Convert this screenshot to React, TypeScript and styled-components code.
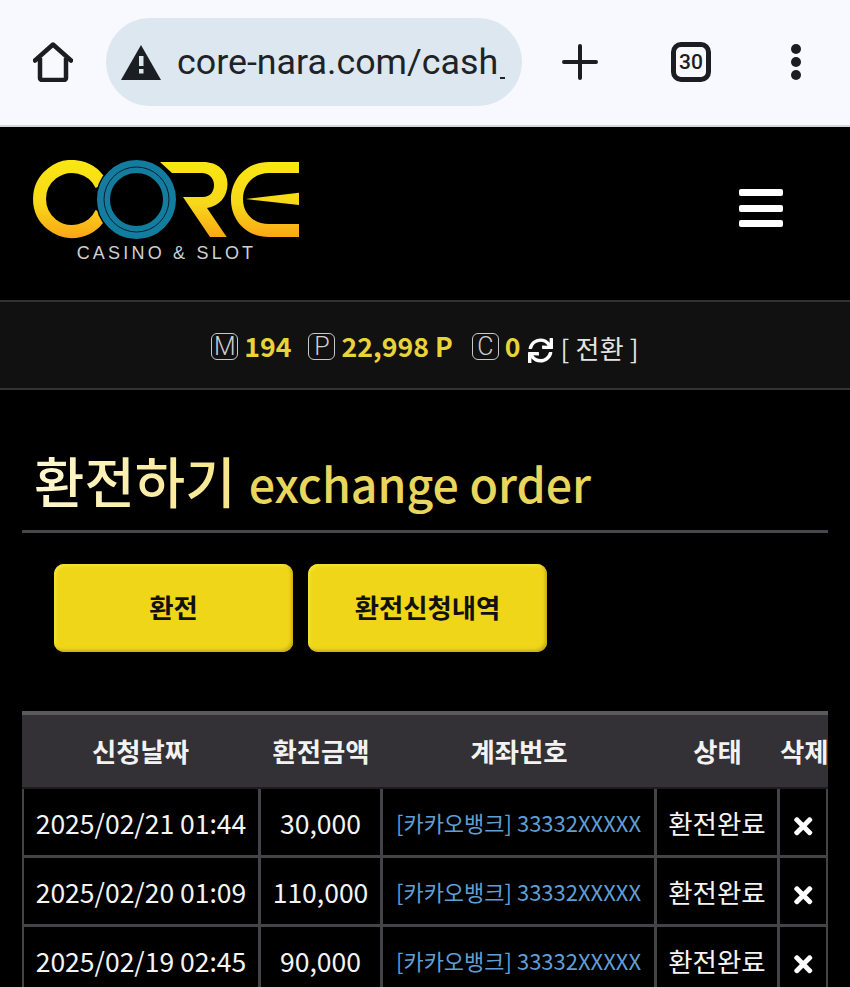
import styled, { createGlobalStyle } from "styled-components";
import { FaSync, FaTimes } from "react-icons/fa";

const rows = [
  { date: "2025/02/21 01:44", amount: "30,000" },
  { date: "2025/02/20 01:09", amount: "110,000" },
  { date: "2025/02/19 02:45", amount: "90,000" },
];

const GlobalStyle = createGlobalStyle`
  html, body {
    margin: 0;
    height: 987px;
    overflow: hidden;
    background: #000;
    font-family: "Noto Sans CJK KR", "Noto Sans", sans-serif;
  }
`;

const Page = styled.div`
  width: 850px;
  height: 987px;
  overflow: hidden;
  background: #000;
`;

const BrowserBar = styled.div`
  height: 127px;
  border-bottom: 2px solid #d6d7da;
  background: #f8f9fe;
  display: flex;
  align-items: center;
  padding: 0 0 1px 33px;
  box-sizing: border-box;
`;

const Omnibox = styled.div`
  width: 416px;
  height: 88px;
  margin-left: 33px;
  border-radius: 44px;
  background: #dce7ef;
  display: flex;
  align-items: center;
  padding-left: 15px;
  box-sizing: border-box;
  overflow: hidden;
  flex-shrink: 0;
`;

const Url = styled.span`
  margin-left: 16px;
  font-family: Roboto, sans-serif;
  font-size: 35.8px;
  color: #1f2328;
  white-space: nowrap;

  /* the cut off start of the next character at the fade edge */
  &::after {
    content: "";
    display: inline-block;
    width: 5px;
    height: 2px;
    margin-left: 2px;
    vertical-align: -5px;
    background: #1f2328;
  }
`;

const PlusButton = styled.div`
  margin-left: 40px;
  display: flex;
`;

const TabCount = styled.div`
  width: 40px;
  height: 40px;
  margin-left: 73px;
  border: 5px solid #1c1d22;
  border-radius: 10px;
  box-sizing: border-box;
  display: flex;
  align-items: center;
  justify-content: center;
  font-family: Roboto, sans-serif;
  font-size: 21px;
  font-weight: 500;
  color: #1c1d22;
`;

const MoreButton = styled.div`
  margin-left: 80px;
  display: flex;
  flex-direction: column;
  gap: 3px;
`;

const Dot = styled.span`
  width: 10px;
  height: 10px;
  border-radius: 50%;
  background: #1c1d22;
`;

const Header = styled.header`
  height: 173px;
  display: flex;
  justify-content: space-between;
  align-items: flex-start;
  padding: 33px 67px 0 33px;
  box-sizing: border-box;
`;

const Logo = styled.div`
  width: 266px;
`;

const LogoCaption = styled.div`
  margin-top: 2px;
  padding-left: 1px;
  text-align: center;
  font-family: "Liberation Sans", sans-serif;
  font-size: 18px;
  line-height: 22px;
  letter-spacing: 3.2px;
  color: #d0d0d0;
`;

const Hamburger = styled.div`
  margin-top: 29px;
  width: 44px;
  display: flex;
  flex-direction: column;
  gap: 8.5px;
`;

const HamburgerBar = styled.span`
  height: 7px;
  border-radius: 2px;
  background: #fff;
`;

const StatusBar = styled.div`
  height: 90px;
  border-top: 2px solid #333;
  border-bottom: 2px solid #333;
  box-sizing: border-box;
  background: #111112;
  display: flex;
  align-items: center;
  justify-content: center;
  padding-top: 2px;
`;

const Badge = styled.span<{ $gap?: number }>`
  width: 27px;
  height: 27px;
  margin-left: ${(p) => p.$gap ?? 0}px;
  margin-right: 6px;
  border: 1px solid #c8c8c8;
  border-radius: 6px;
  box-sizing: border-box;
  display: flex;
  align-items: center;
  justify-content: center;
  font-family: Roboto, sans-serif;
  font-size: 25px;
  font-weight: 300;
  color: #cfcfcf;
`;

const Amount = styled.span`
  margin-bottom: 2px;
  font-size: 26.7px;
  font-weight: 700;
  color: #e9d33a;
`;

const RefreshIcon = styled(FaSync)`
  margin: 9px 8px 0 7px;
  font-size: 25px;
  color: #fff;
`;

const Exchange = styled.span`
  margin-top: 3px;
  font-size: 26px;
  color: #e4e4e4;
  letter-spacing: 0.2px;
`;

const TitleRow = styled.h1`
  margin: 51px 22px 0;
  height: 89px;
  border-bottom: 3px solid #48464a;
  display: flex;
  align-items: baseline;
  font-weight: 500;
  padding-left: 12px;
  box-sizing: content-box;
`;

const TitleKo = styled.span`
  font-size: 54.8px;
  line-height: 76px;
  background: linear-gradient(90deg, #fff7cf, #f7e58a);
  -webkit-background-clip: text;
  background-clip: text;
  color: transparent;
`;

const TitleEn = styled.span`
  margin-left: 13px;
  font-size: 46.5px;
  line-height: 76px;
  color: #e9d65c;
`;

const Buttons = styled.div`
  display: flex;
  gap: 15px;
  margin: 31px 0 0 54px;
`;

const YellowButton = styled.button`
  width: 239px;
  height: 88px;
  border: 0;
  padding: 0 0 3px;
  border-radius: 10px;
  background: #efd619;
  box-shadow: inset -2px -2px 3px #c9ae16, inset 2px 2px 3px #f5e23c;
  font-family: inherit;
  font-size: 26.4px;
  font-weight: 700;
  color: #111;
`;

const Table = styled.table`
  width: 806px;
  margin: 59px 0 0 22px;
  border-collapse: separate;
  border-spacing: 0;
  table-layout: fixed;
  border-top: 4px solid #5a595c;
`;

const HeadCell = styled.th`
  height: 74px;
  box-sizing: border-box;
  padding: 0 2px 2px 0;
  background: #333135;
  font-size: 26.4px;
  font-weight: 700;
  color: #f2f2f2;
  white-space: nowrap;
  border-bottom: 2px solid #1d1c1e;
`;

const Cell = styled.td`
  height: 69px;
  box-sizing: border-box;
  padding: 0;
  border-right: 3px solid #444346;
  border-bottom: 3px solid #444346;
  text-align: center;
  font-size: 26.5px;
  color: #f4f4f4;
  white-space: nowrap;
  overflow: hidden;

  &:first-child {
    border-left: 2px solid #444346;
  }

  &:last-child {
    border-right-width: 2px;
  }
`;

const AccountCell = styled(Cell)`
  font-size: 22px;
  color: #5f9fd6;
`;

const DeleteIcon = styled(FaTimes)`
  display: block;
  margin: 9px auto 0;
  font-size: 26.5px;
  color: #fff;
`;

const App = () => {
  return (
    <Page>
      <GlobalStyle />
      <BrowserBar>
        <svg width="40" height="40" viewBox="0 0 40 40" fill="none" stroke="#1c1d22" strokeWidth="4.5" strokeLinejoin="round">
          <path d="M2 18.5 20 2.5l18 16" strokeLinecap="round" />
          <path d="M7 16v20a2 2 0 0 0 2 2h22a2 2 0 0 0 2-2V16" />
        </svg>
        <Omnibox>
          <svg width="40" height="35" viewBox="0 0 40 35">
            <path d="M20 0 40 35H0Z" fill="#1b1f24" />
            <rect x="18" y="11" width="4.5" height="10" fill="#dce7ef" />
            <rect x="18" y="24" width="4.5" height="4.5" fill="#dce7ef" />
          </svg>
          <Url>core-nara.com/cash</Url>
        </Omnibox>
        <PlusButton>
          <svg width="36" height="36" viewBox="0 0 36 36" stroke="#1c1d22" strokeWidth="4" strokeLinecap="round">
            <path d="M18 2v32M2 18h32" />
          </svg>
        </PlusButton>
        <TabCount>30</TabCount>
        <MoreButton>
          <Dot />
          <Dot />
          <Dot />
        </MoreButton>
      </BrowserBar>

      <Header>
        <Logo>
          <svg width="266" height="80" viewBox="0 0 266 80" style={{ display: "block" }}>
            <defs>
              <linearGradient id="gold" gradientUnits="userSpaceOnUse" x1="0" y1="0" x2="0" y2="79">
                <stop offset="0" stopColor="#f9e712" />
                <stop offset="0.55" stopColor="#f7d81a" />
                <stop offset="1" stopColor="#fba416" />
              </linearGradient>
            </defs>
            <path d="M68.5 25.3A32.5 32.5 0 1 0 68.5 52.7" fill="none" stroke="url(#gold)" strokeWidth="13" />
            <path d="M127 2H170C185 2 194.5 11 194.5 24C194.5 37 186 46 174 48L193.7 77H177L150 37H170C177 37 181 32 181 25C181 18 176 13 169 13H139Z" fill="url(#gold)" />
            <path d="M266 2V13H236C221 13 210 24 210 39C210 54 221 64 236 64H266V77H236C213 77 198 60 198 39.5C198 19 213 2 236 2Z" fill="url(#gold)" />
            <path d="M212.7 39 266 32.7V45Z" fill="url(#gold)" />
            <circle cx="103.5" cy="39.5" r="41" fill="#000" />
            <circle cx="103.5" cy="39.5" r="33" fill="none" stroke="#137c9f" strokeWidth="13" />
            <circle cx="103.5" cy="39.5" r="32.5" fill="none" stroke="#06202b" strokeWidth="1" />
          </svg>
          <LogoCaption>CASINO &amp; SLOT</LogoCaption>
        </Logo>
        <Hamburger>
          <HamburgerBar />
          <HamburgerBar />
          <HamburgerBar />
        </Hamburger>
      </Header>

      <StatusBar>
        <Badge>M</Badge>
        <Amount>194</Amount>
        <Badge $gap={17}>P</Badge>
        <Amount>22,998 P</Amount>
        <Badge $gap={19}>C</Badge>
        <Amount>0</Amount>
        <RefreshIcon />
        <Exchange>[ 전환 ]</Exchange>
      </StatusBar>

      <TitleRow>
        <TitleKo>환전하기</TitleKo>
        <TitleEn>exchange order</TitleEn>
      </TitleRow>

      <Buttons>
        <YellowButton>환전</YellowButton>
        <YellowButton>환전신청내역</YellowButton>
      </Buttons>

      <Table>
        <colgroup>
          <col style={{ width: 239 }} />
          <col style={{ width: 122 }} />
          <col style={{ width: 274 }} />
          <col style={{ width: 123 }} />
          <col style={{ width: 48 }} />
        </colgroup>
        <thead>
          <tr>
            <HeadCell>신청날짜</HeadCell>
            <HeadCell>환전금액</HeadCell>
            <HeadCell>계좌번호</HeadCell>
            <HeadCell>상태</HeadCell>
            <HeadCell>삭제</HeadCell>
          </tr>
        </thead>
        <tbody>
          {rows.map((row) => (
            <tr key={row.date}>
              <Cell>{row.date}</Cell>
              <Cell>{row.amount}</Cell>
              <AccountCell>[카카오뱅크] 33332XXXXX</AccountCell>
              <Cell>환전완료</Cell>
              <Cell>
                <DeleteIcon />
              </Cell>
            </tr>
          ))}
        </tbody>
      </Table>
    </Page>
  );
};

export default App;
